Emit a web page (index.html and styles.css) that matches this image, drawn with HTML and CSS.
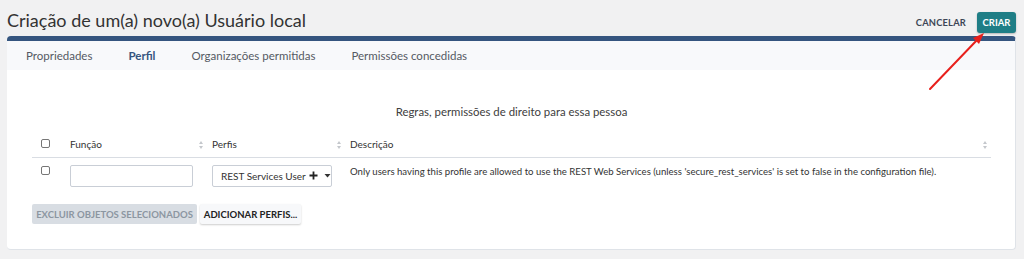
FILE: index.html
```html
<!DOCTYPE html>
<html lang="pt">
<head>
  <meta charset="UTF-8" />
  <title>Criação de um(a) novo(a) Usuário local</title>
  <link rel="stylesheet" href="styles.css">
</head>
<body>

  <div class="page-head">
    <h1>Criação de um(a) novo(a) Usuário local</h1>
    <div class="actions">
      <button class="btn-link">CANCELAR</button>
      <button class="btn-primary">CRIAR</button>
    </div>
  </div>

  <div class="panel">
    <!-- Tabs -->
    <ul class="tabs">
      <li>Propriedades</li>
      <li class="active">Perfil</li>
      <li>Organizações permitidas</li>
      <li>Permissões concedidas</li>
    </ul>

    <div class="panel-body">
      <p class="caption">Regras, permissões de direito para essa pessoa</p>

      <table class="grid">
        <thead>
          <tr>
            <th class="col-check"><span class="checkbox"></span></th>
            <th class="col-func">Função<span class="sort"></span></th>
            <th class="col-prof">Perfis<span class="sort"></span></th>
            <th>Descrição<span class="sort"></span></th>
          </tr>
        </thead>
        <tbody>
          <tr>
            <td class="col-check"><span class="checkbox"></span></td>
            <td class="col-func"><input type="text" class="field"></td>
            <td class="col-prof">
              <div class="select">
                <span>REST Services User</span>
                <svg width="9" height="9" viewBox="0 0 9 9"><path d="M4.5 0.5v8M0.5 4.5h8" stroke="#222" stroke-width="1.8"/></svg>
                <svg width="7" height="4" viewBox="0 0 7 4"><path d="M0.5 0h6L3.5 3.5z" fill="#333"/></svg>
              </div>
            </td>
            <td class="desc">Only users having this profile are allowed to use the REST Web Services (unless 'secure_rest_services' is set to false in the configuration file).</td>
          </tr>
        </tbody>
      </table>

      <div class="buttons">
        <button class="btn-disabled">EXCLUIR OBJETOS SELECIONADOS</button>
        <button class="btn-light">ADICIONAR PERFIS...</button>
      </div>
    </div>
  </div>

  <!-- annotation arrow -->
  <svg class="arrow" width="70" height="70" viewBox="0 0 70 70">
    <path d="M8 62 L56 12" stroke="#e8201c" stroke-width="2" stroke-linecap="round"/>
    <path d="M62 6 L51 11 L57 17 Z" fill="#e8201c"/>
  </svg>

</body>
</html>
```

FILE: styles.css
```css
* {
  box-sizing: border-box;
  margin: 0;
  padding: 0;
}

body {
  background: #f1f1f2;
  color: #404040;
  font-family: 'Lato', 'Open Sans', sans-serif;
  width: 1024px;
  height: 259px;
  overflow: hidden;
  position: relative;
}

button {
  font-family: inherit;
  border: none;
  cursor: pointer;
}

.page-head {
  display: flex;
  align-items: center;
  justify-content: space-between;
  padding: 9px 8px 0 7px;
  height: 36px;
}

.page-head h1 {
  font-size: 18px;
  font-weight: 400;
  color: #333;
  margin-top: -5px;
}

.actions {
  display: flex;
  align-items: center;
  gap: 11px;
}

.btn-link {
  background: none;
  font-size: 9.3px;
  font-weight: 700;
  color: #3d4656;
  letter-spacing: 0.2px;
}

.btn-primary {
  background: #1f7e86;
  color: #fff;
  font-size: 9.5px;
  font-weight: 700;
  height: 21px;
  width: 39px;
  border-radius: 3px;
  box-shadow: 0 1px 2px rgba(0, 0, 0, 0.25);
}

/* Panel */
.panel {
  margin: 0 8px 0 7px;
  height: 214px;
  background: #fff;
  border-top: 5px solid #35557f;
  border-right: 1px solid #dfe3e8;
  border-bottom: 1px solid #dfe3e8;
  border-radius: 4px;
}

.tabs {
  list-style: none;
  display: flex;
  background: #f8f9fb;
  height: 29px;
  align-items: center;
  padding-left: 19px;
}

.tabs li {
  font-size: 11.5px;
  color: #555a63;
  margin-right: 36px;
}

.tabs li.active {
  font-weight: 700;
  color: #35557f;
}

.panel-body {
  padding: 0 24px 0 25px;
}

.caption {
  text-align: center;
  font-size: 11.4px;
  color: #404040;
  margin-top: 35px;
  height: 27px;
}

/* Table */
.grid {
  width: 100%;
  border-collapse: collapse;
  font-size: 10px;
  color: #333;
}

.grid th {
  text-align: left;
  font-weight: 400;
  height: 25px;
  padding-top: 0;
  border-bottom: 1px solid #d9dde3;
  position: relative;
}

.grid td {
  vertical-align: top;
  padding-top: 7px;
  height: 47px;
}

.col-check {
  width: 38px;
  padding-left: 9px;
}

.col-func {
  width: 142px;
}

.col-prof {
  width: 138px;
}

.grid th .sort {
  position: absolute;
  right: 8px;
  top: 9px;
  width: 5px;
  height: 8px;
}

.grid th .sort::before,
.grid th .sort::after {
  content: "";
  position: absolute;
  left: 0;
  border-left: 2.5px solid transparent;
  border-right: 2.5px solid transparent;
}

.grid th .sort::before {
  top: 0;
  border-bottom: 3px solid #c4c7cc;
}

.grid th .sort::after {
  bottom: 0;
  border-top: 3px solid #c4c7cc;
}

.grid th:last-child .sort {
  right: 3px;
}

.checkbox {
  display: inline-block;
  width: 9px;
  height: 9px;
  border: 1px solid #767676;
  border-radius: 2px;
  background: #fff;
}

.field {
  width: 123px;
  height: 22px;
  border: 1px solid #c9ced6;
  border-radius: 2px;
}

.select {
  display: flex;
  align-items: center;
  gap: 3px;
  width: 120px;
  height: 22px;
  border: 1px solid #c9ced6;
  border-radius: 2px;
  padding-left: 8px;
  font-size: 10px;
  color: #333;
  white-space: nowrap;
}

.select svg {
  flex-shrink: 0;
}

.select svg:last-child {
  margin-left: 3px;
}

.desc {
  font-size: 9.6px;
  color: #333;
  padding-top: 8px !important;
}

.buttons {
  display: flex;
  gap: 3px;
}

.btn-disabled {
  background: #d8dde3;
  color: #8c96a1;
  font-size: 9.5px;
  font-weight: 700;
  height: 20px;
  width: 165px;
  border-radius: 2px;
}

.btn-light {
  background: #f7f8fa;
  color: #222;
  font-size: 9.5px;
  font-weight: 700;
  height: 20px;
  width: 101px;
  border-radius: 2px;
  box-shadow: 0 1px 2px rgba(0, 0, 0, 0.2);
}

.arrow {
  position: absolute;
  left: 922px;
  top: 27px;
}
```
